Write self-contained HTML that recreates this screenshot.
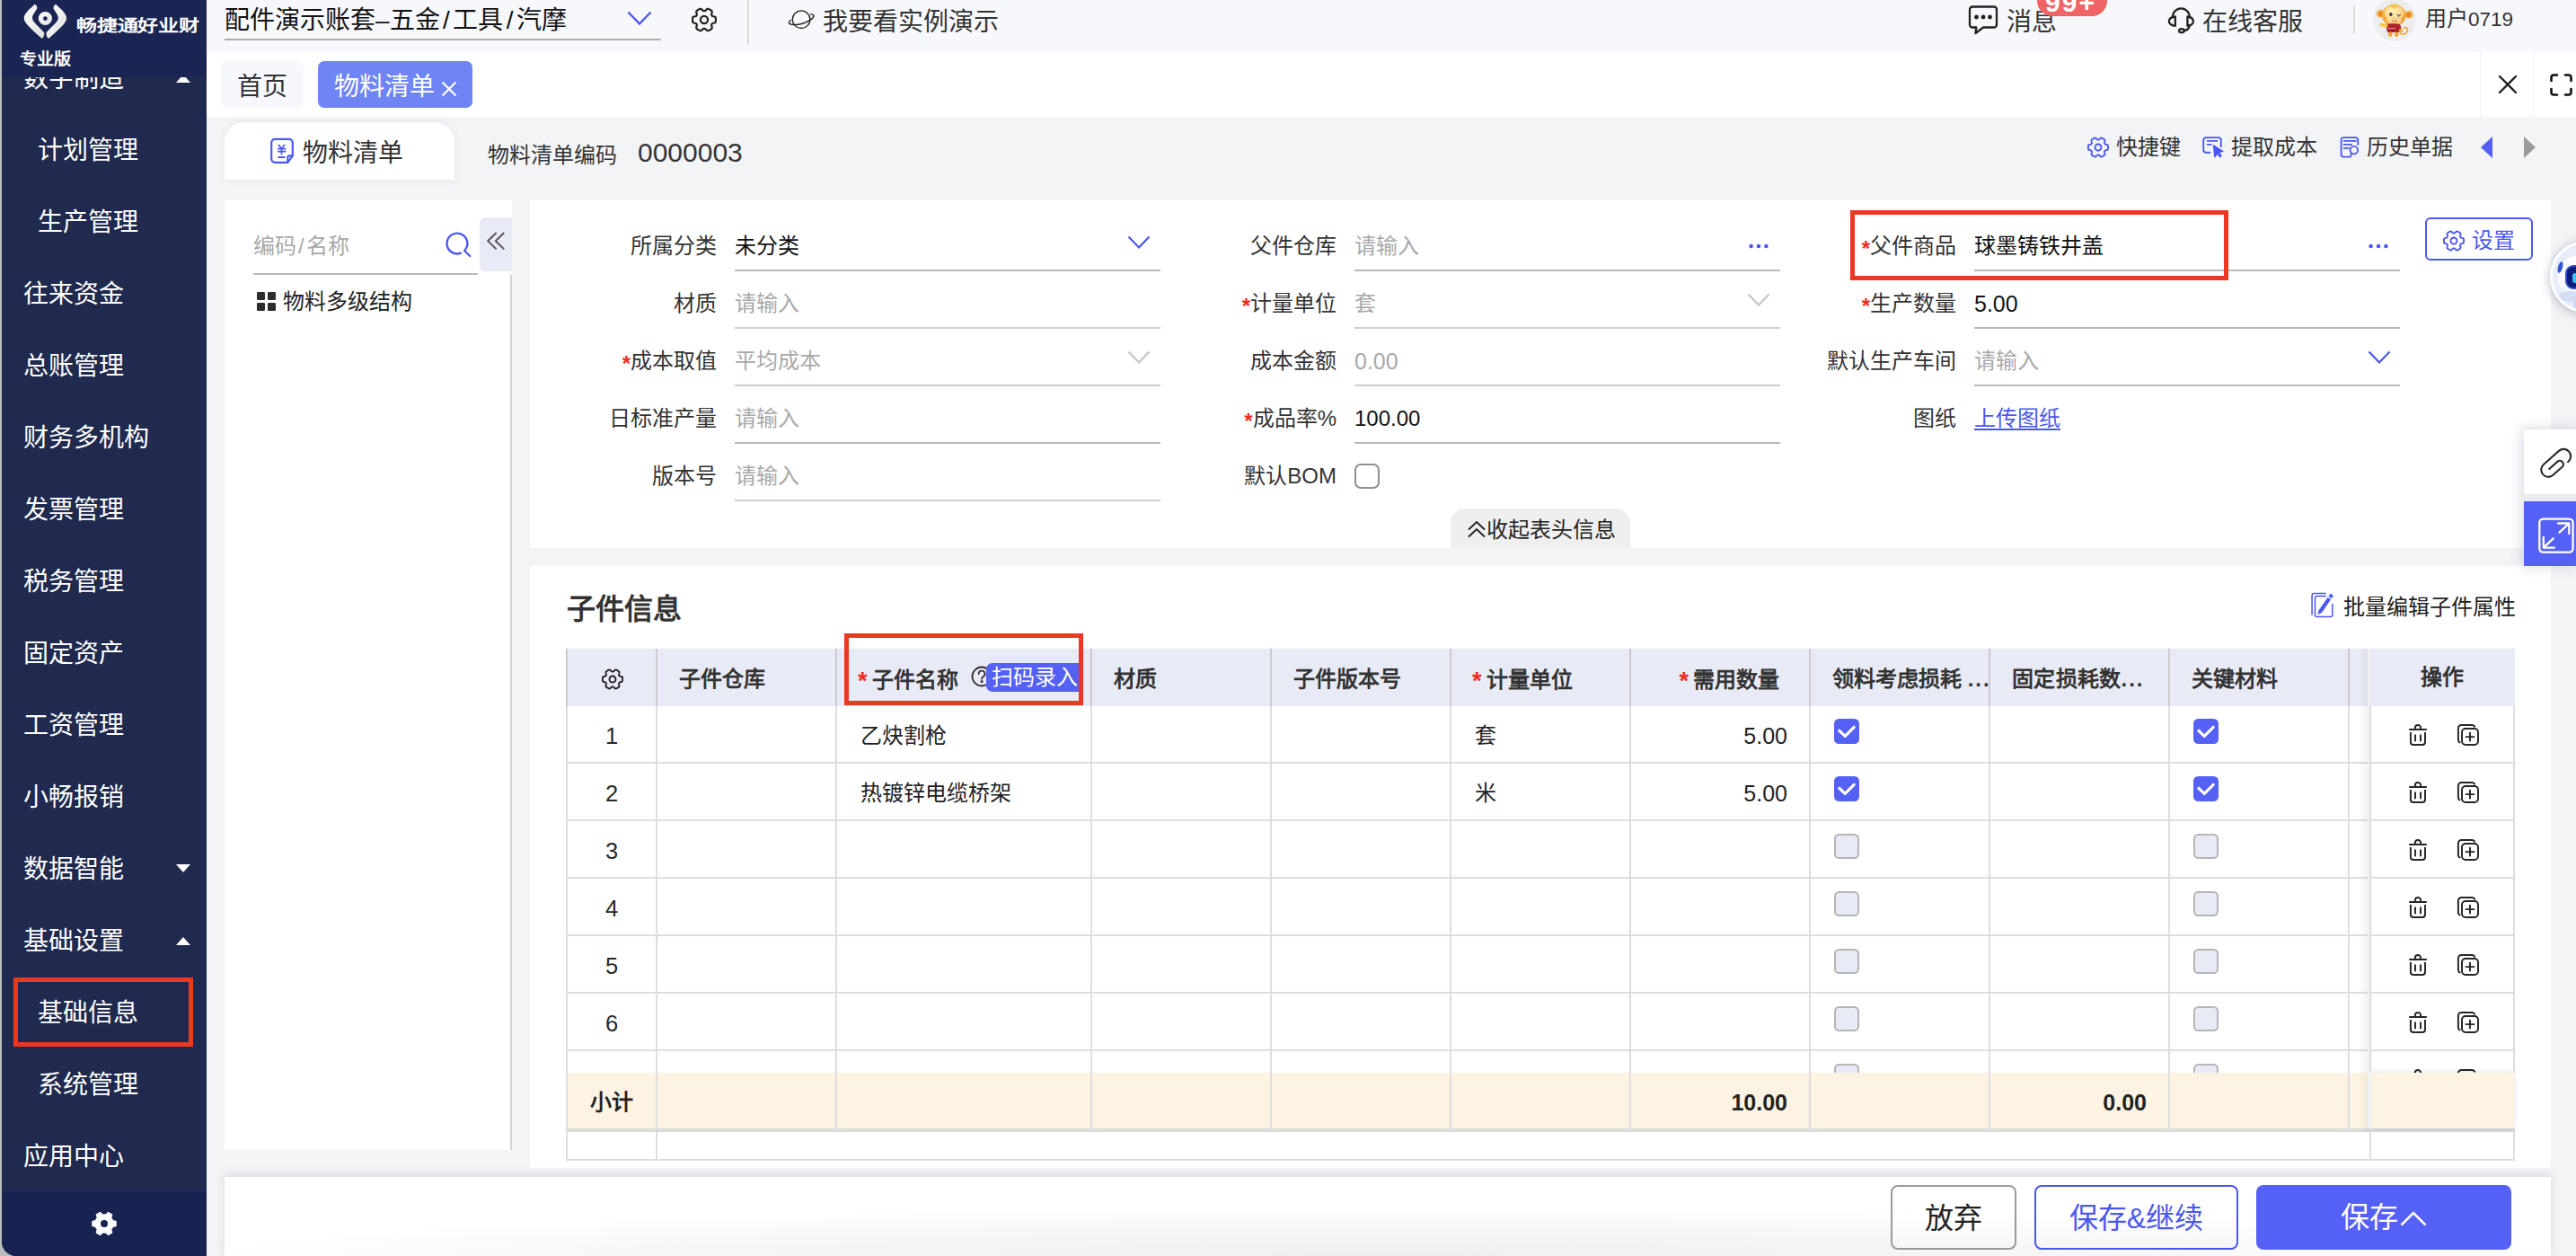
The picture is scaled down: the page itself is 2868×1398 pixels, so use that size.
<!DOCTYPE html>
<html lang="zh-CN">
<head>
<meta charset="utf-8">
<title>物料清单</title>
<style>
*{box-sizing:border-box;margin:0;padding:0}
html,body{width:2868px;height:1398px;overflow:hidden;background:#f3f4f6}
body{font-family:"Liberation Sans",sans-serif;color:#333;position:relative;font-size:24px}
i{font-style:normal}
.abs{position:absolute}
.sl{margin:0 3.500px}
svg{display:block}
#edge{position:absolute;left:0;top:0;width:14px;height:1398px;background:#bdbdc0}
/* sidebar */
#side{position:absolute;left:2px;top:0;width:228px;height:1398px;background:#1f2a4e;border-bottom-left-radius:16px;overflow:hidden;color:#fff}
#side .mi{position:absolute;left:0;width:228px;height:80px;line-height:83px;font-size:28px;font-weight:500;white-space:nowrap}
#side .tri{position:absolute;left:194px;top:37px;width:0;height:0;border-left:8px solid transparent;border-right:8px solid transparent}
#side .tri.up{border-bottom:9px solid #fff}
#side .tri.down{border-top:9px solid #fff;top:36px}
#side .hd{position:absolute;left:0;top:0;width:228px;height:86px;background:#1a2553}
#side .ft{position:absolute;left:0;top:1326px;width:228px;height:72px;background:#182352}
#side .brand{position:absolute;left:83px;top:14px;font-size:23px;line-height:30px;font-weight:bold;letter-spacing:-0.2px;white-space:nowrap;transform-origin:0 50%;transform:scaleY(.8)}
#side .edition{position:absolute;left:19.500px;top:51px;font-size:19px;line-height:30px;font-weight:bold;white-space:nowrap;transform-origin:0 50%;transform:scaleY(.94)}
.redbox{position:absolute;border:5px solid #e83a20;pointer-events:none}
/* top bar */
#top{position:absolute;left:230px;top:0;width:2638px;height:58px;background:#f7f8fc}
#top .acct{position:absolute;left:20px;top:0;height:46px;line-height:46px;font-size:28px;color:#111;white-space:nowrap}
#top .acct-line{position:absolute;left:20px;top:43px;width:486px;height:2px;background:#adadad}
#top .t28{position:absolute;font-size:28px;line-height:50px;color:#333;white-space:nowrap;top:0}
/* tabs */
#tabs{position:absolute;left:230px;top:58px;width:2638px;height:72px;background:#fff}
#tabs .tab{position:absolute;top:10px;height:52px;line-height:58px;border-radius:7px;font-size:28px;white-space:nowrap}
/* doc head */
#dochead .ttab{position:absolute;left:250px;top:136px;width:256px;height:64px;background:#fff;border-radius:22px 22px 0 0;box-shadow:0 0 8px rgba(60,70,110,.08)}
.tool{position:absolute;top:148px;height:32px;line-height:31px;margin-left:-1px;font-size:24px;color:#333;white-space:nowrap}
/* cards */
.card{position:absolute;background:#fff}
.lbl{position:absolute;height:40px;line-height:40px;font-size:24px;color:#333;text-align:right;white-space:nowrap}
.lbl b{color:#f02a1d;font-weight:bold;font-size:24px;position:relative;top:3px;margin-right:0}
.val{position:absolute;height:40px;line-height:40px;font-size:24px;color:#111;white-space:nowrap}
.ph{color:#a9a9a9}
.ul{position:absolute;height:2px;background:#b9b9b9}
.ul.lt{background:#cfcfcf}
/* table */
#tbl{position:absolute;left:630px;top:722px;width:2006px;height:472px;overflow:hidden}
#tbl .th{position:absolute;left:0;top:0;width:2006px;height:64px;background:#e8eaf5}
#tbl .hc{position:absolute;top:0;height:64px;line-height:68px;font-size:24px;font-weight:bold;color:#333;white-space:nowrap;overflow:hidden}
.star{color:#f02a1d;font-weight:bold;font-size:27px;position:relative;top:2px;margin-right:5px}
.tr{position:absolute;left:0;width:2006px;height:64px}
.td{position:absolute;top:0;height:62px;line-height:66px;font-size:24px;color:#222;white-space:nowrap}
.td.c{text-align:center;font-size:25.500px;color:#2a2a2a}
.td.r{text-align:right}
.td.num{font-size:25px}
.vl{position:absolute;top:0;width:2px;height:540px;background:#dedede}
.hl{position:absolute;left:0;width:2170px;height:2px;background:#dedede}
.cbw{position:absolute;top:14px}
.cb{display:block;width:28px;height:28px;border-radius:5.500px}
.cb.on{background:#5560f5}
.cb.off{background:#e8eaf5;border:2px solid #b5b5b8}
#fix{position:absolute;left:2638px;top:722px;width:162px;height:472px;overflow:hidden;background:#fff}
#fix .frow{position:absolute;left:0;width:162px;height:64px}
#fix .ic-trash{position:absolute;left:42px;top:19px}
#fix .ic-copy{position:absolute;left:96px;top:19px}
.btn{position:absolute;top:1319px;height:72px;line-height:70px;border-radius:8px;font-size:32px;font-weight:500;text-align:center;white-space:nowrap}
</style>
</head>
<body>
<svg width="0" height="0" style="position:absolute">
<defs>
<symbol id="gear" viewBox="0 0 24 24"><path d="M23.1 12.0L23.1 12.5L23.1 13.0L23.0 13.4L22.9 13.9L22.8 14.4L22.3 14.8L21.6 15.0L20.8 15.2L20.1 15.4L19.6 15.6L19.5 15.9L19.3 16.2L19.1 16.5L18.9 16.8L19.0 17.3L19.2 18.0L19.4 18.8L19.5 19.5L19.4 20.1L19.1 20.5L18.8 20.8L18.4 21.1L18.0 21.4L17.6 21.6L17.1 21.8L16.7 22.1L16.2 22.3L15.8 22.4L15.3 22.5L14.8 22.3L14.2 21.8L13.6 21.2L13.1 20.7L12.7 20.4L12.4 20.4L12.0 20.4L11.6 20.4L11.3 20.4L10.9 20.7L10.4 21.2L9.8 21.8L9.2 22.3L8.7 22.5L8.2 22.4L7.8 22.3L7.3 22.1L6.9 21.8L6.5 21.6L6.0 21.4L5.6 21.1L5.2 20.8L4.9 20.5L4.6 20.1L4.5 19.5L4.6 18.8L4.8 18.0L5.0 17.3L5.1 16.8L4.9 16.5L4.7 16.2L4.5 15.9L4.4 15.6L3.9 15.4L3.2 15.2L2.4 15.0L1.7 14.8L1.2 14.4L1.1 13.9L1.0 13.4L0.9 13.0L0.9 12.5L0.9 12.0L0.9 11.5L0.9 11.0L1.0 10.6L1.1 10.1L1.2 9.6L1.7 9.2L2.4 9.0L3.2 8.8L3.9 8.6L4.4 8.4L4.5 8.1L4.7 7.8L4.9 7.5L5.1 7.2L5.0 6.7L4.8 6.0L4.6 5.2L4.5 4.5L4.6 3.9L4.9 3.5L5.2 3.2L5.6 2.9L6.0 2.6L6.4 2.4L6.9 2.2L7.3 1.9L7.8 1.7L8.2 1.6L8.7 1.5L9.2 1.7L9.8 2.2L10.4 2.8L10.9 3.3L11.3 3.6L11.6 3.6L12.0 3.6L12.4 3.6L12.7 3.6L13.1 3.3L13.6 2.8L14.2 2.2L14.8 1.7L15.3 1.5L15.8 1.6L16.2 1.7L16.7 1.9L17.1 2.2L17.6 2.4L18.0 2.6L18.4 2.9L18.8 3.2L19.1 3.5L19.4 3.9L19.5 4.5L19.4 5.2L19.2 6.0L19.0 6.7L18.9 7.2L19.1 7.5L19.3 7.8L19.5 8.1L19.6 8.4L20.1 8.6L20.8 8.8L21.6 9.0L22.3 9.2L22.8 9.6L22.9 10.1L23.0 10.6L23.1 11.0L23.1 11.5Z" fill="none" stroke="currentColor" stroke-width="1.9" stroke-linejoin="round"/><circle cx="12" cy="12" r="3.5" fill="none" stroke="currentColor" stroke-width="1.9"/></symbol>
</defs>
</svg>
<div id="edge"></div>
<div id="side">
<div class="mi" style="top:46px;padding-left:24px">数字制造<i class="tri up"></i></div>
<div class="mi" style="top:126px;padding-left:40px">计划管理</div>
<div class="mi" style="top:206px;padding-left:40px">生产管理</div>
<div class="mi" style="top:286px;padding-left:24px">往来资金</div>
<div class="mi" style="top:366px;padding-left:24px">总账管理</div>
<div class="mi" style="top:446px;padding-left:24px">财务多机构</div>
<div class="mi" style="top:526px;padding-left:24px">发票管理</div>
<div class="mi" style="top:606px;padding-left:24px">税务管理</div>
<div class="mi" style="top:686px;padding-left:24px">固定资产</div>
<div class="mi" style="top:766px;padding-left:24px">工资管理</div>
<div class="mi" style="top:846px;padding-left:24px">小畅报销</div>
<div class="mi" style="top:926px;padding-left:24px">数据智能<i class="tri down"></i></div>
<div class="mi" style="top:1006px;padding-left:24px">基础设置<i class="tri up"></i></div>
<div class="mi" style="top:1086px;padding-left:40px">基础信息</div>
<div class="mi" style="top:1166px;padding-left:40px">系统管理</div>
<div class="mi" style="top:1246px;padding-left:24px">应用中心</div>

<div class="hd">
<svg class="abs" style="left:22px;top:2px" width="54" height="44" viewBox="0 0 54 44">
<defs><linearGradient id="lg1" x1="0" y1="0" x2="1" y2="1"><stop offset="0" stop-color="#ffffff"/><stop offset="1" stop-color="#dededf"/></linearGradient></defs>
<path d="M14.7 2.8C9 8 2.7 13 2.7 18.5C2.7 24 14 33 22.8 41C24.5 40 25.6 37 25.2 34.3C20 28 12 23 12 18.1C12 14 16 10.5 17.3 7.6C17.6 5.5 16.5 3.5 14.7 2.8Z" fill="url(#lg1)"/>
<path d="M38.1 2.8C43.8 8.0 50.1 13.0 50.1 18.5C50.1 24.0 38.8 33.0 30.0 41.0C28.3 40.0 27.2 37.0 27.6 34.3C32.8 28.0 40.8 23.0 40.8 18.1C40.8 14.0 36.8 10.5 35.5 7.6C35.2 5.5 36.3 3.5 38.1 2.8Z" fill="url(#lg1)"/>
<circle cx="26.400" cy="18.500" r="7.600" fill="url(#lg1)"/><circle cx="26.400" cy="18.600" r="2.400" fill="#1a2553"/>
</svg>
<div class="brand">畅捷通好业财</div>
<div class="edition">专业版</div>
</div>
<div class="ft"><svg class="abs" style="left:100px;top:22px" width="28" height="28" viewBox="0 0 28 28"><path d="M23.8 10.4L27.3 11.3L27.3 16.7L23.8 17.6L22.0 20.7L23.0 24.2L18.3 26.9L15.8 24.2L12.2 24.2L9.7 26.9L5.0 24.2L6.0 20.7L4.2 17.6L0.7 16.7L0.7 11.3L4.2 10.4L6.0 7.3L5.0 3.8L9.7 1.1L12.2 3.8L15.8 3.8L18.3 1.1L23.0 3.8L22.0 7.3Z" fill="#fff" stroke="#fff" stroke-width=".8" stroke-linejoin="round"/><circle cx="14" cy="14" r="4" fill="#182352"/></svg></div>
<div class="redbox" style="left:13px;top:1088px;width:200px;height:77px"></div>
</div>
<div id="top">
<div class="acct">配件演示账套–五金<i class="sl">/</i>工具<i class="sl">/</i>汽摩</div>
<div class="acct-line"></div>
<svg class="abs" style="left:468px;top:12px" width="28" height="17" viewBox="0 0 28 17" fill="none" stroke="#4b57f2" stroke-width="2.300"><path d="M1.500 1.500L14 14.500 26.500 1.500"/></svg>
<svg class="abs" style="left:540px;top:8px;color:#222" width="28" height="28"><use href="#gear"/></svg>
<i class="abs" style="left:602px;top:0;width:2px;height:50px;background:#dcdcdc"></i>
<svg class="abs" style="left:647px;top:9px" width="32" height="26" viewBox="0 0 32 26" fill="none" stroke="#222" stroke-width="1.400" stroke-linecap="round"><circle cx="15.100" cy="12.700" r="9.800"/><g transform="translate(15.200 12.500) rotate(-17)"><path d="M11.700-2.600A14.300 4.600 0 1 1-11.700-2.600"/></g></svg>
<div class="t28" style="left:686px">我要看实例演示</div>
<!-- right -->
<svg class="abs" style="left:1961px;top:6px" width="34" height="34" viewBox="0 0 34 34" fill="none" stroke="#222" stroke-width="2.300" stroke-linejoin="round" stroke-linecap="round"><path d="M5 1.500h24a3 3 0 0 1 3 3v17a3 3 0 0 1-3 3H17l-8.500 6.500.8-6.500H5a3 3 0 0 1-3-3v-17a3 3 0 0 1 3-3Z"/><circle cx="9.500" cy="13" r="1.300" fill="#222"/><circle cx="17" cy="13" r="1.300" fill="#222"/><circle cx="24.500" cy="13" r="1.300" fill="#222"/></svg>
<div class="t28" style="left:2004px">消息</div>
<div class="abs" style="left:2038px;top:-16px;width:78px;height:34px;border-radius:17px;background:#ef6464;color:#fff;font-weight:bold;font-size:30px;line-height:30px;text-align:center;overflow:hidden;letter-spacing:2px;padding-right:3px"><span style="position:relative;top:4px">99+</span></div>
<svg class="abs" style="left:2183px;top:8px" width="31" height="30" viewBox="0 0 31 30" fill="none" stroke="#222" stroke-width="2.300" stroke-linecap="round" stroke-linejoin="round"><path d="M5.800 11.500A9.550 10.200 0 0 1 24.900 11.500"/><path d="M8.850 10.500V20.800A7 5.150 0 0 1 8.850 10.500Z"/><path d="M22.400 10.500V20.800A6.500 5.150 0 0 0 22.400 10.500Z"/><path d="M24.600 20C24.600 23.500 22 25.600 18.700 26"/><ellipse cx="15.900" cy="26.200" rx="2.800" ry="2"/></svg>
<div class="t28" style="left:2222px">在线客服</div>
<i class="abs" style="left:2390px;top:6px;width:2px;height:32px;background:#dcdcdc"></i>
<!-- avatar -->
<svg class="abs" style="left:2412px;top:-2px" width="48" height="48" viewBox="0 0 48 48"><defs><clipPath id="avc"><circle cx="24" cy="24" r="24"/></clipPath><radialGradient id="mh" cx=".42" cy=".25" r=".8"><stop offset="0" stop-color="#fbd35c"/><stop offset=".6" stop-color="#f4ad3e"/><stop offset="1" stop-color="#e8922e"/></radialGradient><radialGradient id="mf" cx=".4" cy=".25" r=".9"><stop offset="0" stop-color="#fff3b8"/><stop offset=".6" stop-color="#fbd58a"/><stop offset="1" stop-color="#f3b562"/></radialGradient></defs><g clip-path="url(#avc)"><circle cx="24" cy="24" r="24" fill="#ededee"/>
<circle cx="8.300" cy="17.300" r="4.300" fill="#f2a838"/><circle cx="9" cy="17.600" r="2.500" fill="#e08a2c"/>
<circle cx="40" cy="18.200" r="4.300" fill="#f2a838"/><circle cx="39.300" cy="18.500" r="2.500" fill="#e08a2c"/>
<path d="M18.500 8.500l2-2.400 1.400 1.600 1.800-2.600 1.600 2.400 2.200-1.400-.4 3Z" fill="#f7c24c"/>
<ellipse cx="23.300" cy="19" rx="13.300" ry="12" fill="url(#mh)"/>
<path d="M23.300 12.200c1.600-2.400 5-3.200 7.600-1.600 3 1.800 4 5.400 2.800 8.400-.5 1.200-1.300 2-2.200 2.600 1 2 .6 4.600-1.200 6.400-3 3-10.400 3-13.400 0-1.800-1.800-2.200-4.400-1.200-6.400-.9-.6-1.700-1.400-2.200-2.600-1.200-3-.2-6.600 2.800-8.400 2.600-1.600 5.600-.8 6.200 1.600Z" fill="url(#mf)"/>
<ellipse cx="19.900" cy="17.900" rx="1.700" ry="2" fill="#47285a"/><path d="M26.800 18.300l2.800 1-1.600 1.400M29.600 19.300l1.200-.8" stroke="#5a3a6a" stroke-width="1" fill="none" stroke-linecap="round"/>
<ellipse cx="23.700" cy="22.300" rx=".9" ry=".7" fill="#eba060"/>
<path d="M21 23.900c.6 3.400 5 3.400 5.600 0Z" fill="#b85a14"/><rect x="22.300" y="24" width="2.900" height="1.500" rx=".3" fill="#fff6dc"/>
<path d="M14.300 29.200c4-1.400 12.400-1.400 15.800 0l1.200 3-1 5.800H16Z" fill="#b0222a"/><path d="M17 33.500h8.500" stroke="#e8c9c9" stroke-width="1.100" stroke-dasharray="2 .8"/>
<path d="M14.500 30.800l-5-1.200" stroke="#f8c840" stroke-width="4" stroke-linecap="round"/>
<circle cx="31" cy="36" r="2.200" fill="#f2a838"/>
<path d="M30.500 39.500c4 1.200 7.800-.6 8-4 .1-2.400-2.200-3.600-3.800-2.400" stroke="#f0a436" stroke-width="1.800" fill="none" stroke-linecap="round"/>
<rect x="17" y="37.500" width="4.600" height="5.400" rx="2.200" fill="#f0a436"/><rect x="24" y="37.500" width="4.400" height="5.400" rx="2.200" fill="#f0a436"/>
</g></svg>
<div class="abs" style="left:2470px;top:0;font-size:24px;line-height:41px;color:#333;white-space:nowrap">用户<span style="font-size:22.500px">0719</span></div>
</div>
<div id="tabs">
<div class="tab" style="left:16px;width:92px;background:#f6f8fd;color:#333;text-align:center">首页</div>
<div class="tab" style="left:124px;width:172px;background:#6f84f5;color:#fff;padding-left:18px">物料清单<svg class="abs" style="left:137px;top:22px" width="18" height="18" viewBox="0 0 18 18" stroke="#fff" stroke-width="2.200" fill="none"><path d="M1.500 1.500l15 15M16.500 1.500l-15 15"/></svg></div>
<i class="abs" style="left:2531px;top:0;width:2px;height:72px;background:#f5f6fa"></i>
<i class="abs" style="left:2590px;top:0;width:2px;height:72px;background:#f5f6fa"></i>
<svg class="abs" style="left:2551px;top:25px" width="22" height="22" viewBox="0 0 22 22" stroke="#222" stroke-width="2.400" fill="none" stroke-linecap="round"><path d="M2 2l18 18M20 2L2 20"/></svg>
<svg class="abs" style="left:2609px;top:24px" width="25" height="25" viewBox="0 0 25 25" stroke="#111" stroke-width="2.600" fill="none" stroke-linecap="round" stroke-linejoin="round"><path d="M1.500 8V4a2.500 2.500 0 0 1 2.500-2.500h4M17 1.500h4A2.500 2.500 0 0 1 23.500 4v4M23.500 17v4a2.500 2.500 0 0 1-2.500 2.500h-4M8 23.500H4A2.500 2.500 0 0 1 1.500 21v-4"/></svg>
</div>
<div id="dochead">
<div class="ttab"></div>
<svg class="abs" style="left:300px;top:153px" width="28" height="30" viewBox="0 0 28 30" fill="none" stroke="#4b57f2" stroke-width="2.150" stroke-linejoin="round" stroke-linecap="round"><path d="M6.200 1.850H21.800a4 4 0 0 1 4 4V20.300L20.300 27.800H6.200a4 4 0 0 1-4-4V5.850a4 4 0 0 1 4-4Z"/><path d="M25.800 20.300H22.300a2 2 0 0 0-2 2V27.800"/><path d="M10.200 8.300l3.300 4.200 3.300-4.200M13.500 12.500v6M9.600 12.700h8.100M9.600 15.600h8.100" stroke-width="1.700"/><path d="M10.200 22h6.300" stroke-width="2.100"/></svg>
<div class="abs" style="left:337px;top:146px;font-size:28px;line-height:49px;color:#333;white-space:nowrap">物料清单</div>
<div class="abs" style="left:543px;top:152px;font-size:24px;line-height:42px;color:#333;white-space:nowrap">物料清单编码</div>
<div class="abs" style="left:710px;top:148px;font-size:30px;line-height:44px;color:#333;white-space:nowrap">0000003</div>
<svg class="abs" style="left:2324px;top:152px;color:#4b57f2" width="24" height="24"><use href="#gear"/></svg>
<div class="tool" style="left:2357px">快捷键</div>
<svg class="abs" style="left:2452px;top:152px" width="26" height="26" viewBox="0 0 26 26" fill="none" stroke="#4b57f2" stroke-width="1.850" stroke-linejoin="round" stroke-linecap="round"><path d="M8.500 17.700H4.200a3 3 0 0 1-3-3V4.100a3 3 0 0 1 3-3h13.600a3 3 0 0 1 3 3V11"/><path d="M5.800 4.900h10.600M5.800 8.900h4"/><path d="M12.400 9.800L13.800 22.600 16.800 19 19.600 22.800 21.200 21.400 18.400 17.700 23 16.400Z" stroke-width="1.200" fill="#4b57f2"/></svg>
<div class="tool" style="left:2485px">提取成本</div>
<svg class="abs" style="left:2605px;top:152px" width="24" height="26" viewBox="0 0 24 26" fill="none" stroke="#4b57f2" stroke-width="1.850" stroke-linejoin="round" stroke-linecap="round"><path d="M11 22.600H4.100a2.500 2.500 0 0 1-2.500-2.500V3.600a2.500 2.500 0 0 1 2.500-2.500h13.600a2.500 2.500 0 0 1 2.500 2.500V9"/><path d="M4.600 4.900h13.200M4.600 8.900h8.600M4.600 12.800h5.300"/><circle cx="15.800" cy="15.100" r="4.300"/><path d="M13.100 18.700l-1.300 3.800"/></svg>
<div class="tool" style="left:2636px">历史单据</div>
<i class="abs" style="left:2762px;top:152px;width:0;height:0;border-top:12px solid transparent;border-bottom:12px solid transparent;border-right:13px solid #5560f0"></i>
<i class="abs" style="left:2810px;top:152px;width:0;height:0;border-top:12px solid transparent;border-bottom:12px solid transparent;border-left:13px solid #9b9b9b"></i>
</div>
<div class="card" style="left:250px;top:222px;width:320px;height:1058px">
<i class="abs" style="left:318px;top:84px;width:2px;height:974px;background:#d4d4d6"></i>
<div class="abs ph" style="left:32px;top:32px;font-size:24px;line-height:40px;white-space:nowrap">编码<i style="margin:0 2px">/</i>名称</div>
<i class="ul" style="left:32px;top:82px;width:250px"></i>
<svg class="abs" style="left:245px;top:35px" width="30" height="30" viewBox="0 0 30 30" fill="none" stroke="#4b57f2" stroke-width="2.300" stroke-linecap="round"><path d="M17.970 24.690A11.400 11.400 0 1 1 23.230 20.680"/><path d="M22 22L28.300 28"/></svg>
<div class="abs" style="left:284px;top:20px;width:36px;height:60px;background:#e8eaf5;border-radius:6px 0 0 6px"></div>
<svg class="abs" style="left:292px;top:36px" width="21" height="21" viewBox="0 0 21 21" fill="none" stroke="#555" stroke-width="1.900"><path d="M10.600 1L1.200 10.200 10.600 19.400M19.200 1L9.800 10.200 19.200 19.400"/></svg>
<svg class="abs" style="left:36px;top:103px" width="21" height="21" viewBox="0 0 21 21" fill="#2c2c2c"><rect x="0" y="0" width="9" height="9" rx="1.200"/><rect x="12" y="0" width="9" height="9" rx="1.200"/><rect x="0" y="12" width="9" height="9" rx="1.200"/><rect x="12" y="12" width="9" height="9" rx="1.200"/></svg>
<div class="abs" style="left:65px;top:94px;font-size:24px;line-height:40px;color:#222;white-space:nowrap">物料多级结构</div>
</div>
<div class="card" style="left:590px;top:222px;width:2250px;height:388px"></div>
<div class="lbl" style="left:590px;width:208px;top:254px">所属分类</div><div class="val" style="left:818px;top:254px">未分类</div><i class="ul" style="left:818px;top:300px;width:474px"></i><svg class="abs" style="left:1255px;top:262px" width="26" height="16" viewBox="0 0 26 16" fill="none" stroke="#4b57f2" stroke-width="2.200"><path d="M1.500 1.500L13 13.500 24.500 1.500"/></svg>
<div class="lbl" style="left:590px;width:208px;top:318px">材质</div><div class="val ph" style="left:818px;top:318px">请输入</div><i class="ul lt" style="left:818px;top:364px;width:474px"></i>
<div class="lbl" style="left:590px;width:208px;top:382px"><b>*</b>成本取值</div><div class="val ph" style="left:818px;top:382px">平均成本</div><i class="ul lt" style="left:818px;top:428px;width:474px"></i><svg class="abs" style="left:1255px;top:390px" width="26" height="16" viewBox="0 0 26 16" fill="none" stroke="#c4c4c4" stroke-width="2.200"><path d="M1.500 1.500L13 13.500 24.500 1.500"/></svg>
<div class="lbl" style="left:590px;width:208px;top:446px">日标准产量</div><div class="val ph" style="left:818px;top:446px">请输入</div><i class="ul" style="left:818px;top:492px;width:474px"></i>
<div class="lbl" style="left:590px;width:208px;top:510px">版本号</div><div class="val ph" style="left:818px;top:510px">请输入</div><i class="ul lt" style="left:818px;top:556px;width:474px"></i>
<div class="lbl" style="left:1280px;width:208px;top:254px">父件仓库</div><div class="val ph" style="left:1508px;top:254px">请输入</div><i class="ul" style="left:1508px;top:300px;width:474px"></i><svg class="abs" style="left:1947px;top:271px" width="22" height="6" viewBox="0 0 22 6" fill="#4b57f2"><circle cx="2.600" cy="3" r="2.300"/><circle cx="11" cy="3" r="2.300"/><circle cx="19.400" cy="3" r="2.300"/></svg>
<div class="lbl" style="left:1280px;width:208px;top:318px"><b>*</b>计量单位</div><div class="val ph" style="left:1508px;top:318px">套</div><i class="ul lt" style="left:1508px;top:364px;width:474px"></i><svg class="abs" style="left:1945px;top:326px" width="26" height="16" viewBox="0 0 26 16" fill="none" stroke="#c4c4c4" stroke-width="2.200"><path d="M1.500 1.500L13 13.500 24.500 1.500"/></svg>
<div class="lbl" style="left:1280px;width:208px;top:382px">成本金额</div><div class="val ph" style="left:1508px;top:382px;font-size:25px">0.00</div><i class="ul lt" style="left:1508px;top:428px;width:474px"></i>
<div class="lbl" style="left:1280px;width:208px;top:446px"><b>*</b>成品率%</div><div class="val" style="left:1508px;top:446px">100.00</div><i class="ul" style="left:1508px;top:492px;width:474px"></i>
<div class="lbl" style="left:1280px;width:208px;top:510px">默认BOM</div><i class="abs" style="left:1508px;top:516px;width:28px;height:28px;border:2px solid #8f8f8f;border-radius:7px;background:#fff"></i>
<div class="lbl" style="left:1970px;width:208px;top:254px"><b>*</b>父件商品</div><div class="val" style="left:2198px;top:254px">球墨铸铁井盖</div><i class="ul" style="left:2198px;top:300px;width:474px"></i><svg class="abs" style="left:2637px;top:271px" width="22" height="6" viewBox="0 0 22 6" fill="#4b57f2"><circle cx="2.600" cy="3" r="2.300"/><circle cx="11" cy="3" r="2.300"/><circle cx="19.400" cy="3" r="2.300"/></svg>
<div class="lbl" style="left:1970px;width:208px;top:318px"><b>*</b>生产数量</div><div class="val" style="left:2198px;top:318px;font-size:25px">5.00</div><i class="ul" style="left:2198px;top:364px;width:474px"></i>
<div class="lbl" style="left:1970px;width:208px;top:382px">默认生产车间</div><div class="val ph" style="left:2198px;top:382px">请输入</div><i class="ul" style="left:2198px;top:428px;width:474px"></i><svg class="abs" style="left:2636px;top:390px" width="26" height="16" viewBox="0 0 26 16" fill="none" stroke="#4b57f2" stroke-width="2.200"><path d="M1.500 1.500L13 13.500 24.500 1.500"/></svg>
<div class="lbl" style="left:1970px;width:208px;top:446px">图纸</div><div class="val" style="left:2198px;top:446px"><span style="color:#4b57f2;text-decoration:underline;text-underline-offset:3px;text-decoration-thickness:2px">上传图纸</span></div>
<div class="abs" style="left:2700px;top:242px;width:120px;height:48px;border:2px solid #4b57f2;border-radius:6px"></div>
<svg class="abs" style="left:2720px;top:256px;color:#4b57f2" width="24" height="24"><use href="#gear"/></svg>
<div class="abs" style="left:2752px;top:248px;font-size:24px;line-height:40px;color:#4b57f2;white-space:nowrap">设置</div>
<div class="redbox" style="left:2060px;top:234px;width:421px;height:78px"></div>
<div class="abs" style="left:1615px;top:566px;width:200px;height:44px;background:#efefef;border-radius:16px 16px 0 0"></div>
<svg class="abs" style="left:1634px;top:579px" width="20" height="20" viewBox="0 0 20 20" fill="none" stroke="#222" stroke-width="1.900"><path d="M1 10.500L10 2l9 8.500M1 18.500L10 10l9 8.500"/></svg>
<div class="abs" style="left:1655px;top:569px;font-size:24px;line-height:41px;color:#222;white-space:nowrap">收起表头信息</div>

<div class="card" style="left:590px;top:630px;width:2250px;height:670px"></div>
<div class="abs" style="left:631px;top:652px;font-size:32px;line-height:52px;font-weight:bold;color:#333;white-space:nowrap">子件信息</div>
<svg class="abs" style="left:2572px;top:659px" width="28" height="30" viewBox="0 0 28 30" fill="none" stroke="#4b57f2" stroke-width="1.500" stroke-linejoin="round" stroke-linecap="butt"><path d="M17.850 1.550H4.100a2 2 0 0 0-2 2V25.800"/><path d="M17.850 4.500H7.500a2 2 0 0 0-2 2V25.600a2 2 0 0 0 2 2H22.800a2 2 0 0 0 2-2V13.100"/><path d="M8.900 24.800L9.800 20.400 19.700 6.200 22.700 8.300 13 22.600Z" fill="#4b57f2" stroke-width=".6"/><path d="M20.800 4.600L22.800 1.900 25.600 4.100 23.600 6.900Z" fill="#4b57f2" stroke-width=".6"/></svg>
<div class="abs" style="left:2609px;top:655px;font-size:24px;line-height:41px;color:#222;white-space:nowrap">批量编辑子件属性</div>
<div id="tbl">
<div class="th"></div>
<div class="tr" style="top:64px"><div class="td c" style="left:2px;width:98px">1</div><div class="td" style="left:302px;width:282px;padding-left:26px">乙炔割枪</div><div class="td" style="left:986px;width:198px;padding-left:26px">套</div><div class="td r num" style="left:1186px;width:198px;padding-right:24px">5.00</div><div class="td" style="left:1386px;width:198px"><span class="cbw" style="left:26px"><span class="cb on"><svg width="28" height="28" viewBox="0 0 28 28" fill="none" stroke="#fff" stroke-width="3.200" stroke-linecap="round" stroke-linejoin="round"><path d="M5.900 13.300L12.200 19.400 22.200 9.300"/></svg></span></span></div><div class="td" style="left:1786px;width:198px"><span class="cbw" style="left:26px"><span class="cb on"><svg width="28" height="28" viewBox="0 0 28 28" fill="none" stroke="#fff" stroke-width="3.200" stroke-linecap="round" stroke-linejoin="round"><path d="M5.900 13.300L12.200 19.400 22.200 9.300"/></svg></span></span></div></div>
<div class="tr" style="top:128px"><div class="td c" style="left:2px;width:98px">2</div><div class="td" style="left:302px;width:282px;padding-left:26px">热镀锌电缆桥架</div><div class="td" style="left:986px;width:198px;padding-left:26px">米</div><div class="td r num" style="left:1186px;width:198px;padding-right:24px">5.00</div><div class="td" style="left:1386px;width:198px"><span class="cbw" style="left:26px"><span class="cb on"><svg width="28" height="28" viewBox="0 0 28 28" fill="none" stroke="#fff" stroke-width="3.200" stroke-linecap="round" stroke-linejoin="round"><path d="M5.900 13.300L12.200 19.400 22.200 9.300"/></svg></span></span></div><div class="td" style="left:1786px;width:198px"><span class="cbw" style="left:26px"><span class="cb on"><svg width="28" height="28" viewBox="0 0 28 28" fill="none" stroke="#fff" stroke-width="3.200" stroke-linecap="round" stroke-linejoin="round"><path d="M5.900 13.300L12.200 19.400 22.200 9.300"/></svg></span></span></div></div>
<div class="tr" style="top:192px"><div class="td c" style="left:2px;width:98px">3</div><div class="td" style="left:302px;width:282px;padding-left:26px"></div><div class="td" style="left:986px;width:198px;padding-left:26px"></div><div class="td r num" style="left:1186px;width:198px;padding-right:24px"></div><div class="td" style="left:1386px;width:198px"><span class="cbw" style="left:26px"><span class="cb off"></span></span></div><div class="td" style="left:1786px;width:198px"><span class="cbw" style="left:26px"><span class="cb off"></span></span></div></div>
<div class="tr" style="top:256px"><div class="td c" style="left:2px;width:98px">4</div><div class="td" style="left:302px;width:282px;padding-left:26px"></div><div class="td" style="left:986px;width:198px;padding-left:26px"></div><div class="td r num" style="left:1186px;width:198px;padding-right:24px"></div><div class="td" style="left:1386px;width:198px"><span class="cbw" style="left:26px"><span class="cb off"></span></span></div><div class="td" style="left:1786px;width:198px"><span class="cbw" style="left:26px"><span class="cb off"></span></span></div></div>
<div class="tr" style="top:320px"><div class="td c" style="left:2px;width:98px">5</div><div class="td" style="left:302px;width:282px;padding-left:26px"></div><div class="td" style="left:986px;width:198px;padding-left:26px"></div><div class="td r num" style="left:1186px;width:198px;padding-right:24px"></div><div class="td" style="left:1386px;width:198px"><span class="cbw" style="left:26px"><span class="cb off"></span></span></div><div class="td" style="left:1786px;width:198px"><span class="cbw" style="left:26px"><span class="cb off"></span></span></div></div>
<div class="tr" style="top:384px"><div class="td c" style="left:2px;width:98px">6</div><div class="td" style="left:302px;width:282px;padding-left:26px"></div><div class="td" style="left:986px;width:198px;padding-left:26px"></div><div class="td r num" style="left:1186px;width:198px;padding-right:24px"></div><div class="td" style="left:1386px;width:198px"><span class="cbw" style="left:26px"><span class="cb off"></span></span></div><div class="td" style="left:1786px;width:198px"><span class="cbw" style="left:26px"><span class="cb off"></span></span></div></div>
<div class="tr" style="top:448px"><div class="td c" style="left:2px;width:98px">7</div><div class="td" style="left:302px;width:282px;padding-left:26px"></div><div class="td" style="left:986px;width:198px;padding-left:26px"></div><div class="td r num" style="left:1186px;width:198px;padding-right:24px"></div><div class="td" style="left:1386px;width:198px"><span class="cbw" style="left:26px"><span class="cb off"></span></span></div><div class="td" style="left:1786px;width:198px"><span class="cbw" style="left:26px"><span class="cb off"></span></span></div></div>

<i class="vl" style="left:0px"></i><i class="vl" style="left:0px;height:64px;background:#cbcbcf"></i><i class="vl" style="left:100px"></i><i class="vl" style="left:100px;height:64px;background:#cbcbcf"></i><i class="vl" style="left:300px"></i><i class="vl" style="left:300px;height:64px;background:#cbcbcf"></i><i class="vl" style="left:584px"></i><i class="vl" style="left:584px;height:64px;background:#cbcbcf"></i><i class="vl" style="left:784px"></i><i class="vl" style="left:784px;height:64px;background:#cbcbcf"></i><i class="vl" style="left:984px"></i><i class="vl" style="left:984px;height:64px;background:#cbcbcf"></i><i class="vl" style="left:1184px"></i><i class="vl" style="left:1184px;height:64px;background:#cbcbcf"></i><i class="vl" style="left:1384px"></i><i class="vl" style="left:1384px;height:64px;background:#cbcbcf"></i><i class="vl" style="left:1584px"></i><i class="vl" style="left:1584px;height:64px;background:#cbcbcf"></i><i class="vl" style="left:1784px"></i><i class="vl" style="left:1784px;height:64px;background:#cbcbcf"></i><i class="vl" style="left:1984px"></i><i class="vl" style="left:1984px;height:64px;background:#cbcbcf"></i>
<i class="hl" style="top:126px"></i><i class="hl" style="top:190px"></i><i class="hl" style="top:254px"></i><i class="hl" style="top:318px"></i><i class="hl" style="top:382px"></i><i class="hl" style="top:446px"></i>
<svg class="abs" style="left:40px;top:22px;color:#222" width="24" height="24"><use href="#gear"/></svg>
<div class="hc" style="left:126px">子件仓库</div>
<div class="hc" style="left:325px"><span class="star">*</span>子件名称</div>
<svg class="abs" style="left:451px;top:19px" width="24" height="24" viewBox="0 0 24 24" fill="none" stroke="#333" stroke-width="1.800" stroke-linecap="round"><circle cx="12" cy="12" r="10.500"/><path d="M8.600 9.200a3.500 3.500 0 1 1 5 3.100c-1 .6-1.500 1.200-1.500 2.400"/><circle cx="12.100" cy="17.600" r=".6" fill="#333"/></svg>
<div class="abs" style="left:468px;top:16px;width:108px;height:32px;background:#5560f5;border-radius:7px 0 0 7px;color:#fff;font-size:24px;line-height:32px;padding-left:6px;white-space:nowrap;overflow:hidden">扫码录入</div>
<div class="hc" style="left:610px">材质</div>
<div class="hc" style="left:810px">子件版本号</div>
<div class="hc" style="left:1009px"><span class="star">*</span>计量单位</div>
<div class="hc" style="left:1185px;width:166px;text-align:right"><span class="star">*</span>需用数量</div>
<div class="hc" style="left:1410px;width:175px">领料考虑损耗 <span style="letter-spacing:2px">...</span></div>
<div class="hc" style="left:1610px;width:160px;letter-spacing:.3px">固定损耗数<span style="letter-spacing:2px">...</span></div>
<div class="hc" style="left:1810px">关键材料</div>
<!-- subtotal -->
<div class="abs" style="left:0;top:472px;width:2006px;height:62px;background:#fcf3e2"></div>
</div>
<div id="sub" class="abs" style="left:630px;top:1194px;width:2006px;height:62px;background:#fcf3e2;overflow:hidden">
<i class="abs" style="left:0px;top:0;width:2px;height:62px;background:#dedede"></i><i class="abs" style="left:100px;top:0;width:2px;height:62px;background:#dedede"></i><i class="abs" style="left:300px;top:0;width:2px;height:62px;background:#dedede"></i><i class="abs" style="left:584px;top:0;width:2px;height:62px;background:#dedede"></i><i class="abs" style="left:784px;top:0;width:2px;height:62px;background:#dedede"></i><i class="abs" style="left:984px;top:0;width:2px;height:62px;background:#dedede"></i><i class="abs" style="left:1184px;top:0;width:2px;height:62px;background:#dedede"></i><i class="abs" style="left:1384px;top:0;width:2px;height:62px;background:#dedede"></i><i class="abs" style="left:1584px;top:0;width:2px;height:62px;background:#dedede"></i><i class="abs" style="left:1784px;top:0;width:2px;height:62px;background:#dedede"></i><i class="abs" style="left:1984px;top:0;width:2px;height:62px;background:#dedede"></i>
<div class="abs" style="left:2px;top:0;width:98px;height:62px;line-height:66px;text-align:center;font-size:24px;font-weight:bold;color:#222">小计</div>
<div class="abs" style="left:1186px;top:0;width:174px;height:62px;line-height:66px;text-align:right;font-size:25px;font-weight:bold;color:#222">10.00</div>
<div class="abs" style="left:1586px;top:0;width:174px;height:62px;line-height:66px;text-align:right;font-size:25px;font-weight:bold;color:#222">0.00</div>
</div>
<i class="abs" style="left:630px;top:1256px;width:2170px;height:4px;background:#dcdcdc"></i>
<i class="abs" style="left:630px;top:1290px;width:2170px;height:2px;background:#dedede"></i>
<i class="abs" style="left:630px;top:1194px;width:2px;height:97px;background:#dedede"></i>
<i class="abs" style="left:730px;top:1260px;width:2px;height:31px;background:#dedede"></i>
<i class="abs" style="left:2638px;top:1260px;width:2px;height:31px;background:#dedede"></i>
<i class="abs" style="left:2798px;top:1260px;width:2px;height:31px;background:#dedede"></i>
<!-- fixed column -->
<div class="abs" style="left:2626px;top:722px;width:12px;height:538px;background:linear-gradient(to right,rgba(0,0,0,0),rgba(0,0,0,.055))"></div>
<div id="fix">
<div class="abs" style="left:0;top:0;width:162px;height:64px;background:#e8eaf5;line-height:64px;text-align:center;font-size:24px;font-weight:bold;color:#333">操作</div>
<div class="frow" style="top:64px"><svg class="ic-trash" width="24" height="26" viewBox="0 0 24 26" fill="none" stroke="#262626" stroke-width="1.950" stroke-linecap="round" stroke-linejoin="round"><path d="M2.900 7H21.100"/><path d="M8.900 6.600V5.100a3.100 3.100 0 0 1 6.200 0V6.600"/><path d="M3.900 10.600V20.900a3 3 0 0 0 3 3H17a3 3 0 0 0 3-3V10.600"/><path d="M9 13.200v6.400M15 13.200v6.400"/></svg><svg class="ic-copy" width="27" height="26" viewBox="0 0 27 26" fill="none" stroke="#262626" stroke-width="1.950" stroke-linecap="round" stroke-linejoin="round"><rect x="7" y="6" width="18" height="17.900" rx="4"/><path d="M21.100 3.600A3.600 3.600 0 0 0 18 1.960H6.500A3.600 3.600 0 0 0 2.900 5.560V18.400a3.600 3.600 0 0 0 1.600 3"/><path d="M16 10.600v9M11.500 15.100h9"/></svg></div>
<div class="frow" style="top:128px"><svg class="ic-trash" width="24" height="26" viewBox="0 0 24 26" fill="none" stroke="#262626" stroke-width="1.950" stroke-linecap="round" stroke-linejoin="round"><path d="M2.900 7H21.100"/><path d="M8.900 6.600V5.100a3.100 3.100 0 0 1 6.200 0V6.600"/><path d="M3.900 10.600V20.900a3 3 0 0 0 3 3H17a3 3 0 0 0 3-3V10.600"/><path d="M9 13.200v6.400M15 13.200v6.400"/></svg><svg class="ic-copy" width="27" height="26" viewBox="0 0 27 26" fill="none" stroke="#262626" stroke-width="1.950" stroke-linecap="round" stroke-linejoin="round"><rect x="7" y="6" width="18" height="17.900" rx="4"/><path d="M21.100 3.600A3.600 3.600 0 0 0 18 1.960H6.500A3.600 3.600 0 0 0 2.900 5.560V18.400a3.600 3.600 0 0 0 1.600 3"/><path d="M16 10.600v9M11.500 15.100h9"/></svg></div>
<div class="frow" style="top:192px"><svg class="ic-trash" width="24" height="26" viewBox="0 0 24 26" fill="none" stroke="#262626" stroke-width="1.950" stroke-linecap="round" stroke-linejoin="round"><path d="M2.900 7H21.100"/><path d="M8.900 6.600V5.100a3.100 3.100 0 0 1 6.200 0V6.600"/><path d="M3.900 10.600V20.900a3 3 0 0 0 3 3H17a3 3 0 0 0 3-3V10.600"/><path d="M9 13.200v6.400M15 13.200v6.400"/></svg><svg class="ic-copy" width="27" height="26" viewBox="0 0 27 26" fill="none" stroke="#262626" stroke-width="1.950" stroke-linecap="round" stroke-linejoin="round"><rect x="7" y="6" width="18" height="17.900" rx="4"/><path d="M21.100 3.600A3.600 3.600 0 0 0 18 1.960H6.500A3.600 3.600 0 0 0 2.900 5.560V18.400a3.600 3.600 0 0 0 1.600 3"/><path d="M16 10.600v9M11.500 15.100h9"/></svg></div>
<div class="frow" style="top:256px"><svg class="ic-trash" width="24" height="26" viewBox="0 0 24 26" fill="none" stroke="#262626" stroke-width="1.950" stroke-linecap="round" stroke-linejoin="round"><path d="M2.900 7H21.100"/><path d="M8.900 6.600V5.100a3.100 3.100 0 0 1 6.200 0V6.600"/><path d="M3.900 10.600V20.900a3 3 0 0 0 3 3H17a3 3 0 0 0 3-3V10.600"/><path d="M9 13.200v6.400M15 13.200v6.400"/></svg><svg class="ic-copy" width="27" height="26" viewBox="0 0 27 26" fill="none" stroke="#262626" stroke-width="1.950" stroke-linecap="round" stroke-linejoin="round"><rect x="7" y="6" width="18" height="17.900" rx="4"/><path d="M21.100 3.600A3.600 3.600 0 0 0 18 1.960H6.500A3.600 3.600 0 0 0 2.900 5.560V18.400a3.600 3.600 0 0 0 1.600 3"/><path d="M16 10.600v9M11.500 15.100h9"/></svg></div>
<div class="frow" style="top:320px"><svg class="ic-trash" width="24" height="26" viewBox="0 0 24 26" fill="none" stroke="#262626" stroke-width="1.950" stroke-linecap="round" stroke-linejoin="round"><path d="M2.900 7H21.100"/><path d="M8.900 6.600V5.100a3.100 3.100 0 0 1 6.200 0V6.600"/><path d="M3.900 10.600V20.900a3 3 0 0 0 3 3H17a3 3 0 0 0 3-3V10.600"/><path d="M9 13.200v6.400M15 13.200v6.400"/></svg><svg class="ic-copy" width="27" height="26" viewBox="0 0 27 26" fill="none" stroke="#262626" stroke-width="1.950" stroke-linecap="round" stroke-linejoin="round"><rect x="7" y="6" width="18" height="17.900" rx="4"/><path d="M21.100 3.600A3.600 3.600 0 0 0 18 1.960H6.500A3.600 3.600 0 0 0 2.900 5.560V18.400a3.600 3.600 0 0 0 1.600 3"/><path d="M16 10.600v9M11.500 15.100h9"/></svg></div>
<div class="frow" style="top:384px"><svg class="ic-trash" width="24" height="26" viewBox="0 0 24 26" fill="none" stroke="#262626" stroke-width="1.950" stroke-linecap="round" stroke-linejoin="round"><path d="M2.900 7H21.100"/><path d="M8.900 6.600V5.100a3.100 3.100 0 0 1 6.200 0V6.600"/><path d="M3.900 10.600V20.900a3 3 0 0 0 3 3H17a3 3 0 0 0 3-3V10.600"/><path d="M9 13.200v6.400M15 13.200v6.400"/></svg><svg class="ic-copy" width="27" height="26" viewBox="0 0 27 26" fill="none" stroke="#262626" stroke-width="1.950" stroke-linecap="round" stroke-linejoin="round"><rect x="7" y="6" width="18" height="17.900" rx="4"/><path d="M21.100 3.600A3.600 3.600 0 0 0 18 1.960H6.500A3.600 3.600 0 0 0 2.900 5.560V18.400a3.600 3.600 0 0 0 1.600 3"/><path d="M16 10.600v9M11.500 15.100h9"/></svg></div>
<div class="frow" style="top:448px"><svg class="ic-trash" width="24" height="26" viewBox="0 0 24 26" fill="none" stroke="#262626" stroke-width="1.950" stroke-linecap="round" stroke-linejoin="round"><path d="M2.900 7H21.100"/><path d="M8.900 6.600V5.100a3.100 3.100 0 0 1 6.200 0V6.600"/><path d="M3.900 10.600V20.900a3 3 0 0 0 3 3H17a3 3 0 0 0 3-3V10.600"/><path d="M9 13.200v6.400M15 13.200v6.400"/></svg><svg class="ic-copy" width="27" height="26" viewBox="0 0 27 26" fill="none" stroke="#262626" stroke-width="1.950" stroke-linecap="round" stroke-linejoin="round"><rect x="7" y="6" width="18" height="17.900" rx="4"/><path d="M21.100 3.600A3.600 3.600 0 0 0 18 1.960H6.500A3.600 3.600 0 0 0 2.900 5.560V18.400a3.600 3.600 0 0 0 1.600 3"/><path d="M16 10.600v9M11.500 15.100h9"/></svg></div>

<i class="abs" style="left:0;top:126px;width:162px;height:2px;background:#dedede"></i><i class="abs" style="left:0;top:190px;width:162px;height:2px;background:#dedede"></i><i class="abs" style="left:0;top:254px;width:162px;height:2px;background:#dedede"></i><i class="abs" style="left:0;top:318px;width:162px;height:2px;background:#dedede"></i><i class="abs" style="left:0;top:382px;width:162px;height:2px;background:#dedede"></i><i class="abs" style="left:0;top:446px;width:162px;height:2px;background:#dedede"></i>
<i class="abs" style="left:0;top:64px;width:2px;height:420px;background:#dedede"></i>
<i class="abs" style="left:160px;top:64px;width:2px;height:420px;background:#dedede"></i>
</div>
<div class="abs" style="left:2640px;top:1194px;width:159px;height:62px;background:#fcf3e2;box-shadow:0 -2px 5px rgba(0,0,0,.08),0 4px 6px rgba(0,0,0,.06)"></div>
<div class="redbox" style="left:940px;top:705px;width:266px;height:80px"></div>

<div class="abs" style="left:250px;top:1310px;width:2590px;height:88px;background:radial-gradient(ellipse 52% 64% at 50% 102%,#f0f0f1 0,#f5f5f6 50%,#fff 100%);box-shadow:0 -3px 10px rgba(40,50,80,.13)"></div>
<div class="btn" style="left:2105px;width:140px;border:2px solid #9a9a9a;color:#222;background:linear-gradient(to bottom,#fff 40%,#f6f6f7)">放弃</div>
<div class="btn" style="left:2265px;width:227px;border:2px solid #4b57f2;color:#4b57f2;background:linear-gradient(to bottom,#fff 40%,#f6f6f7)">保存&amp;继续</div>
<div class="btn" style="left:2512px;width:284px;background:#5560f5;color:#fff;line-height:72px;padding-right:32px">保存<svg class="abs" style="left:160px;top:29px" width="30" height="17" viewBox="0 0 30 17" fill="none" stroke="#fff" stroke-width="2.600"><path d="M1.500 15.500L15 2l13.500 13.500"/></svg></div>

<div class="abs" style="left:2810px;top:477px;width:58px;height:153px;box-shadow:-2px 0 14px rgba(40,50,90,.18)"></div>
<div class="abs" style="left:2810px;top:477px;width:58px;height:73px;background:#fff;border-top:1px solid #e4e4e8"></div>
<div class="abs" style="left:2810px;top:550px;width:58px;height:8px;background:#ececf0"></div>
<div class="abs" style="left:2810px;top:558px;width:58px;height:72px;background:#5560f5"></div>
<svg class="abs" style="left:2826px;top:496px" width="40" height="40" viewBox="0 0 40 40" fill="none" stroke="#2b2b2b" stroke-width="2.300" stroke-linecap="round"><g transform="translate(19.500 19.500) rotate(48.400) scale(.93)"><path d="M8.500-12V-12.500A8.500 8.500 0 0 0-8.500-12.500V12A8.500 8.500 0 0 0 8.500 12V-2.600A4.250 4.250 0 0 0 0-2.600V10.500"/></g></svg>
<svg class="abs" style="left:2826px;top:576px" width="42" height="41" viewBox="0 0 42 41" fill="none" stroke="#fff" stroke-width="2.300" stroke-linecap="round" stroke-linejoin="round"><rect x="1.300" y="1.700" width="37.300" height="36.900" rx="4"/><path d="M22.100 6.500H34.300V18M34.300 6.500L23.500 16.600M5.800 22V33.600H18M5.800 33.600L16.700 23.400"/></svg>
<!-- robot -->
<div class="abs" style="left:2839px;top:268px;width:80px;height:80px;border-radius:50%;background:#e6edf9;border:3px solid #fff;box-shadow:0 2px 12px rgba(40,50,90,.32);overflow:hidden">
<div class="abs" style="left:5px;top:12px;width:56px;height:50px;border-radius:50%;background:radial-gradient(circle at 35% 30%,#fff 0,#f3f6fd 60%,#dfe5f7 100%)"></div>
<div class="abs" style="left:6px;top:20px;width:5px;height:13px;border-radius:50%;background:#3454d8;transform:rotate(16deg)"></div>
<div class="abs" style="left:14px;top:24px;width:44px;height:27px;border-radius:9px;background:#0c1a78;border:2px solid #3550cc"></div>
<div class="abs" style="left:22px;top:33px;width:11px;height:11px;border-radius:3px;background:#3cc2f2"></div>
<div class="abs" style="left:6px;top:53px;width:26px;height:12px;border-radius:50%;background:#d3daf4;opacity:.9"></div>
<div class="abs" style="left:24px;top:56px;width:30px;height:24px;border-radius:8px 8px 0 0;background:#cfd6f3"></div>
</div>
</body>
</html>
